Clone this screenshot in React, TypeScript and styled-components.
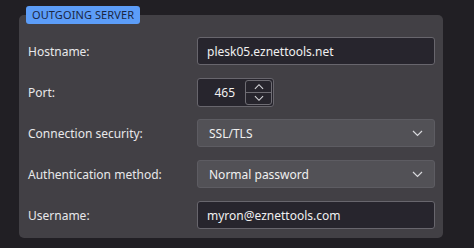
import * as React from 'react'
import styled, { createGlobalStyle } from 'styled-components'

const GlobalStyle = createGlobalStyle`
  html, body {
    margin: 0;
    padding: 0;
    background: #211f24;
    font-family: "Noto Sans", "Open Sans", sans-serif;
  }
`

const Page = styled.div`
  width: 474px;
  height: 248px;
  padding: 6px 0 0 19px;
  box-sizing: border-box;
`

const Group = styled.fieldset`
  width: 424px;
  margin: 0;
  padding: 13px 8px 9px 9px;
  box-sizing: border-box;
  border: none;
  border-radius: 5px;
  background: #424045;
`

const Legend = styled.legend`
  margin-left: -2px;
  padding: 0 6px;
  height: 18px;
  line-height: 18px;
  border-radius: 3px;
  background: #5c9df8;
  color: #1b2743;
  font-size: 11px;
  letter-spacing: 0.1px;
`

const Form = styled.div`
  display: grid;
  grid-template-columns: 169px 238px;
  grid-auto-rows: 28px;
  row-gap: 13px;
  align-items: center;
`

const Label = styled.label`
  color: #e8e8ea;
  font-size: 12px;
`

const TextField = styled.input`
  height: 28px;
  box-sizing: border-box;
  padding: 0 9px;
  border: 1px solid #68666d;
  border-radius: 3px;
  background: #27252d;
  color: #f0f0f0;
  font-family: inherit;
  font-size: 12px;
  outline: none;
`

const SpinBox = styled.div`
  display: flex;
  width: 77px;
  height: 29px;
  box-sizing: border-box;
  border: 1px solid #68666d;
  border-radius: 3px;
  background: #27252d;
  overflow: hidden;
`

const SpinValue = styled.div`
  flex: 1;
  display: flex;
  align-items: center;
  justify-content: flex-end;
  padding-right: 10px;
  color: #f0f0f0;
  font-size: 12px;
`

const SpinButtons = styled.div`
  display: flex;
  flex-direction: column;
  width: 27px;
  margin: 1px 1px 1px 0;
  border: 1px solid #6f6d74;
  border-radius: 3px;
  box-sizing: border-box;
`

const SpinButton = styled.div<{ $top?: boolean }>`
  flex: 1;
  display: flex;
  align-items: center;
  justify-content: center;
  border-bottom: ${p => (p.$top ? '1px solid #6f6d74' : 'none')};
`

const Select = styled.div`
  display: flex;
  align-items: center;
  justify-content: space-between;
  height: 28px;
  box-sizing: border-box;
  padding: 0 11px 0 11px;
  border: 1px solid #5d5c62;
  border-radius: 3px;
  background: #525156;
  color: #f0f0f0;
  font-size: 12px;
`

const Chevron = ({ up, w = 11 }: { up?: boolean; w?: number }) => (
  <svg width={w} height={7} viewBox="0 0 11 7">
    <path
      d={up ? 'M1 6 L5.5 1.5 L10 6' : 'M1 1 L5.5 5.5 L10 1'}
      stroke="#d8d8dc"
      strokeWidth="1.2"
      fill="none"
    />
  </svg>
)

export default function App() {
  return (
    <Page>
      <GlobalStyle />
      <Group>
        <Legend>OUTGOING SERVER</Legend>
        <Form>
          <Label>Hostname:</Label>
          <TextField defaultValue="plesk05.eznettools.net" />

          <Label>Port:</Label>
          <SpinBox>
            <SpinValue>465</SpinValue>
            <SpinButtons>
              <SpinButton $top>
                <Chevron up w={10} />
              </SpinButton>
              <SpinButton>
                <Chevron w={10} />
              </SpinButton>
            </SpinButtons>
          </SpinBox>

          <Label>Connection security:</Label>
          <Select>
            SSL/TLS
            <Chevron />
          </Select>

          <Label>Authentication method:</Label>
          <Select>
            Normal password
            <Chevron />
          </Select>

          <Label>Username:</Label>
          <TextField defaultValue="myron@eznettools.com" />
        </Form>
      </Group>
    </Page>
  )
}
